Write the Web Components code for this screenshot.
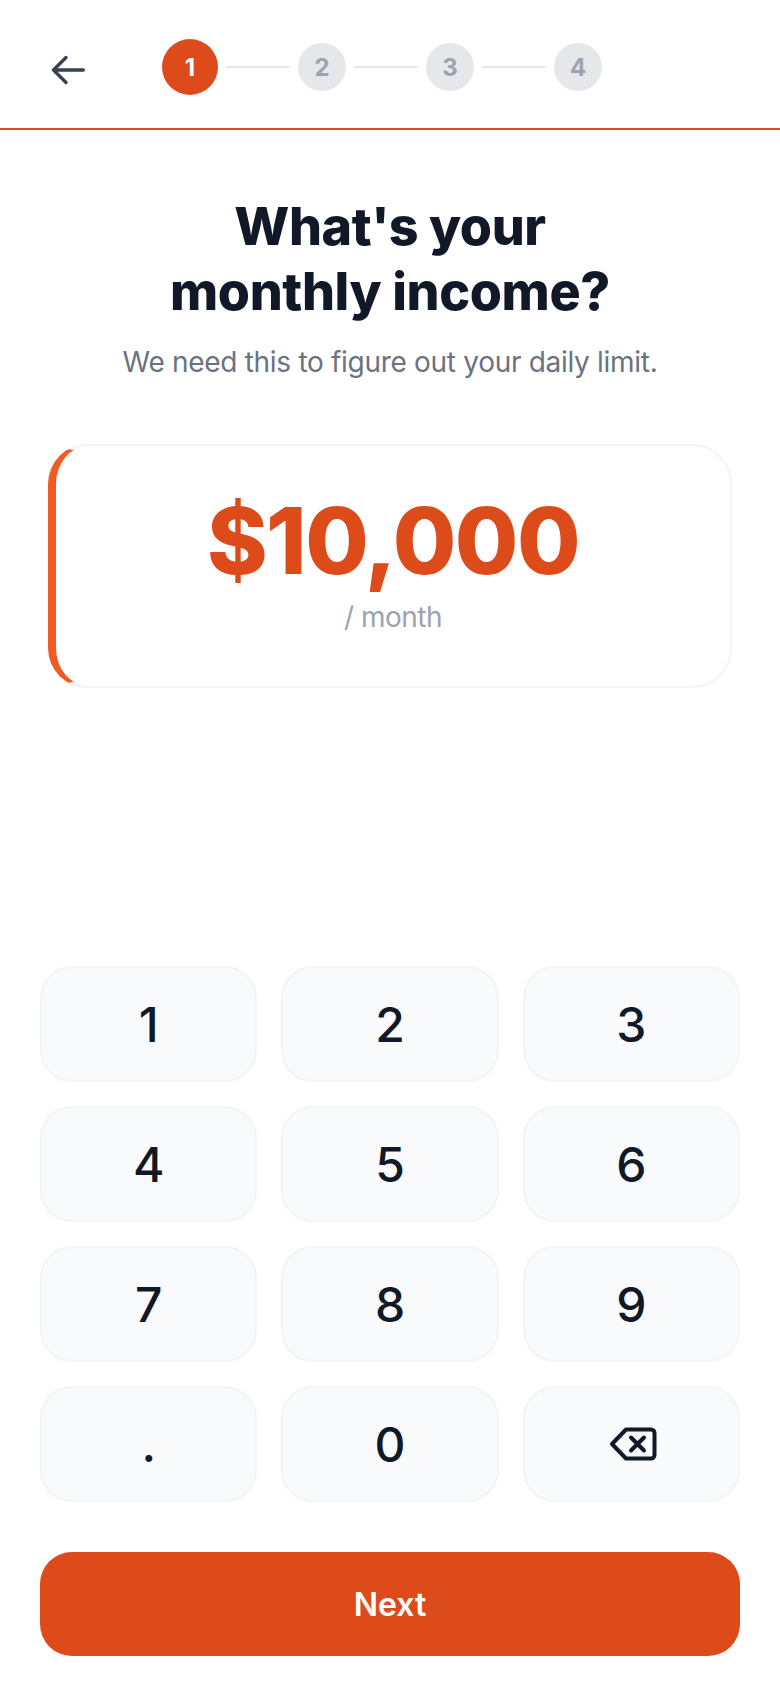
<!DOCTYPE html>
<html lang="en">
<head>
<meta charset="utf-8">
<title>Monthly income</title>
<style>
  html, body { margin: 0; background: #fff; }
  body { font-family: "Inter", "Noto Sans", sans-serif; }
</style>
</head>
<body>
<income-screen>
  <step-header slot="header" current="1" total="4"></step-header>
  <screen-title slot="title" subtitle="We need this to figure out your daily limit.">What's your<br>monthly income?</screen-title>
  <amount-card slot="amount" unit="/ month">$10,000</amount-card>
  <num-pad slot="pad">
    <pad-key>1</pad-key><pad-key>2</pad-key><pad-key>3</pad-key>
    <pad-key>4</pad-key><pad-key>5</pad-key><pad-key>6</pad-key>
    <pad-key>7</pad-key><pad-key>8</pad-key><pad-key>9</pad-key>
    <pad-key>.</pad-key><pad-key>0</pad-key>
    <pad-key aria-label="Delete">
      <svg style="margin-left:3px" width="48" height="34" viewBox="0 0 48 34" fill="none" stroke="#111827" stroke-width="4" stroke-linecap="round" stroke-linejoin="round">
        <path d="M17 2.500H42a3.500 3.500 0 0 1 3.500 3.500V28a3.500 3.500 0 0 1-3.500 3.500H17L3 17Z"/>
        <path d="M22 10.500 35 23.500M35 10.500 22 23.500"/>
      </svg>
    </pad-key>
  </num-pad>
  <next-button slot="action">Next</next-button>
</income-screen>

<script>
class IncomeScreen extends HTMLElement {
  constructor() {
    super();
    this.attachShadow({ mode: "open" });
  }

  connectedCallback() {
    this.shadowRoot.innerHTML = `
      <style>
        :host {
          display: flex;
          flex-direction: column;
          width: 780px;
          height: 1688px;
          box-sizing: border-box;
          overflow: hidden;
          background: #fff;
        }
        .pad { margin-top: auto; }
      </style>
      <slot name="header"></slot>
      <slot name="title"></slot>
      <slot name="amount"></slot>
      <div class="pad"><slot name="pad"></slot></div>
      <slot name="action"></slot>
    `;
  }
}

class StepHeader extends HTMLElement {
  constructor() {
    super();
    this.attachShadow({ mode: "open" });
  }

  getSteps() {
    const current = Number(this.getAttribute("current"));
    const total = Number(this.getAttribute("total"));
    let html = "";
    for (let i = 1; i <= total; i++) {
      html += `<span class="step ${i === current ? "active" : ""}">${i}</span>`;
      if (i < total) html += `<span class="line"></span>`;
    }
    return html;
  }

  connectedCallback() {
    this.shadowRoot.innerHTML = `
      <style>
        :host {
          display: flex;
          align-items: center;
          height: 130px;
          box-sizing: border-box;
          padding: 8px 0 2px 48px;
          border-bottom: 2px solid #de4b1a;
        }
        .back { display: block; width: 40px; height: 40px; margin: 6px 74px 0 0; }
        .steps { display: flex; align-items: center; gap: 8px; }
        .step {
          display: flex;
          align-items: center;
          justify-content: center;
          width: 48px;
          height: 48px;
          border-radius: 50%;
          background: #e5e7eb;
          color: #9ca3af;
          font-size: 24px;
          font-weight: 700;
        }
        .step.active { width: 56px; height: 56px; background: #de4b1a; color: #fff; }
        .line { width: 64px; height: 2px; background: #e5e7eb; }
      </style>
      <svg class="back" viewBox="0 0 40 40" fill="none" stroke="#374151" stroke-width="3.400" stroke-linecap="round" stroke-linejoin="round">
        <path d="M35.300 20H5.500M18 7.500 5.500 20 18 32.500"/>
      </svg>
      <div class="steps">${this.getSteps()}</div>
    `;
  }
}

class ScreenTitle extends HTMLElement {
  constructor() {
    super();
    this.attachShadow({ mode: "open" });
  }

  connectedCallback() {
    this.shadowRoot.innerHTML = `
      <style>
        :host { display: block; padding-top: 64px; text-align: center; }
        h1 {
          margin: 0;
          font-size: 52px;
          line-height: 65px;
          font-weight: 800;
          letter-spacing: -0.4px;
          color: #111827;
        }
        p {
          margin: 18px 0 0;
          font-size: 28px;
          line-height: 40px;
          font-weight: 400;
          letter-spacing: -0.3px;
          color: #6b7280;
        }
      </style>
      <h1><slot></slot></h1>
      <p>${this.getAttribute("subtitle")}</p>
    `;
  }
}

class AmountCard extends HTMLElement {
  constructor() {
    super();
    this.attachShadow({ mode: "open" });
  }

  connectedCallback() {
    this.shadowRoot.innerHTML = `
      <style>
        :host {
          display: flex;
          flex-direction: column;
          align-items: center;
          height: 244px;
          box-sizing: border-box;
          margin: 62px 48px 0;
          padding: 40px 0 0;
          background: #fff;
          border: 2px solid #f3f4f6;
          border-left: 8px solid #f15a22;
          border-radius: 40px;
        }
        .value {
          font-size: 92px;
          line-height: 110px;
          font-weight: 800;
          letter-spacing: -1.500px;
          color: #de4b1a;
        }
        .unit {
          margin-top: 3px;
          font-size: 28px;
          line-height: 36px;
          letter-spacing: -0.5px;
          color: #9ca3af;
        }
      </style>
      <div class="value"><slot></slot></div>
      <div class="unit">${this.getAttribute("unit")}</div>
    `;
  }
}

class NumPad extends HTMLElement {
  constructor() {
    super();
    this.attachShadow({ mode: "open" });
  }

  connectedCallback() {
    this.shadowRoot.innerHTML = `
      <style>
        :host {
          display: grid;
          grid-template-columns: repeat(3, 1fr);
          grid-auto-rows: 116px;
          gap: 24px;
          padding: 0 40px;
        }
      </style>
      <slot></slot>
    `;
  }
}

class PadKey extends HTMLElement {
  constructor() {
    super();
    this.attachShadow({ mode: "open" });
  }

  connectedCallback() {
    this.shadowRoot.innerHTML = `
      <style>
        :host {
          display: flex;
          align-items: center;
          justify-content: center;
          box-sizing: border-box;
          background: #f9fafb;
          border: 2px solid #f3f4f6;
          border-radius: 32px;
          font-size: 48px;
          font-weight: 500;
          color: #111827;
        }
      </style>
      <slot></slot>
    `;
  }
}

class NextButton extends HTMLElement {
  constructor() {
    super();
    this.attachShadow({ mode: "open" });
  }

  connectedCallback() {
    this.shadowRoot.innerHTML = `
      <style>
        :host { display: block; padding: 50px 40px 32px; }
        button {
          display: block;
          width: 100%;
          height: 104px;
          border: 0;
          padding: 0;
          border-radius: 32px;
          background: #de4b1a;
          color: #fff;
          font: 600 32px "Inter", "Noto Sans", sans-serif;
        }
      </style>
      <button><slot></slot></button>
    `;
  }
}

customElements.define("income-screen", IncomeScreen);
customElements.define("step-header", StepHeader);
customElements.define("screen-title", ScreenTitle);
customElements.define("amount-card", AmountCard);
customElements.define("num-pad", NumPad);
customElements.define("pad-key", PadKey);
customElements.define("next-button", NextButton);
</script>
</body>
</html>
